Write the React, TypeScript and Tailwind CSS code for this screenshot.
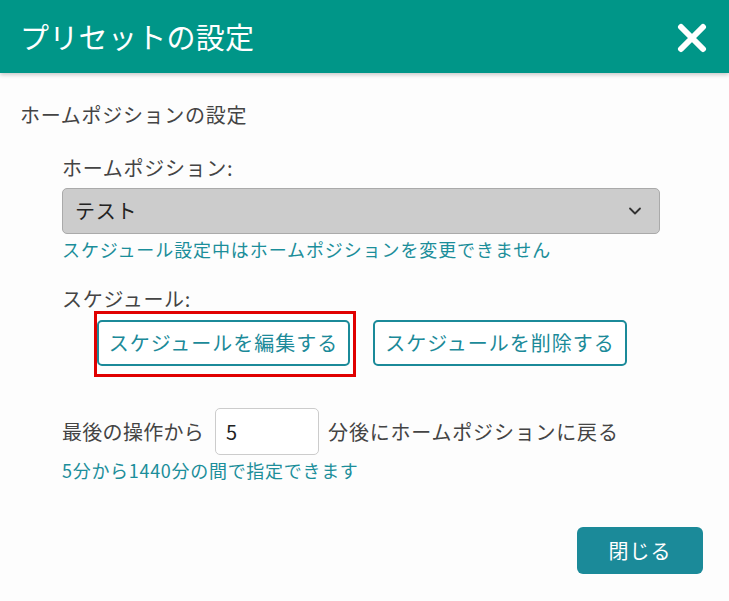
import { ChevronDown } from "lucide-react";

export default function App() {
  return (
    <div
      className="flex h-[601px] w-[729px] flex-col bg-[#fdfdfd] text-[#444]"
      style={{ fontFamily: '"Noto Sans CJK JP", "Noto Sans", sans-serif' }}
    >
      {/* Header */}
      <header className="flex h-[73px] shrink-0 items-center justify-between bg-[#009688] pl-[20px] pr-[22px] shadow-[0_2px_4px_rgba(0,0,0,0.2)]">
        <h1 className="text-[29px] font-normal leading-none tracking-[0.3px] text-white">プリセットの設定</h1>
        <svg width="30" height="30" viewBox="0 0 30 30" className="mt-[2px]">
          <path d="M4 4 L26 26 M26 4 L4 26" stroke="white" strokeWidth="6" strokeLinecap="round" />
        </svg>
      </header>

      {/* Body */}
      <main className="flex flex-1 flex-col px-[20px] pt-[30px]">
        <p className="text-[20px] leading-[24px] tracking-[0.7px]">ホームポジションの設定</p>

        <div className="ml-[42px] mt-[29px] flex flex-col">
          <label className="text-[20px] leading-[24px] tracking-[0.7px]">ホームポジション:</label>
          <div className="mt-[8px] flex h-[46px] w-[598px] items-center justify-between rounded-[5px] border border-[#aaa] bg-[#cccccc] pl-[12px] pr-[14px]">
            <span className="text-[20px] tracking-[0.7px] text-[#222]">テスト</span>
            <ChevronDown className="h-[20px] w-[20px] text-[#333]" strokeWidth={2.2} />
          </div>
          <p className="mt-[3px] text-[18px] leading-[24px] tracking-[0.9px] text-[#1b8e9a]">
            スケジュール設定中はホームポジションを変更できません
          </p>

          <label className="mt-[26px] text-[20px] leading-[24px] tracking-[0.7px]">スケジュール:</label>
          <div className="flex items-start gap-[17px] pl-[32px]">
            <div className="border-[3px] border-[#e00000] pb-[8px] pr-[3px] pt-[6px]">
              <button className="h-[46px] w-[253px] rounded-[5px] border-2 border-[#1b8a99] bg-white text-[20px] tracking-[1px] text-[#1b8a99]">
                スケジュールを編集する
              </button>
            </div>
            <button className="mt-[9px] h-[46px] w-[254px] rounded-[5px] border-2 border-[#1b8a99] bg-white text-[20px] tracking-[1px] text-[#1b8a99]">
              スケジュールを削除する
            </button>
          </div>

          <div className="mt-[31px] flex items-center">
            <span className="text-[20px] tracking-[0.3px]">最後の操作から</span>
            <div className="ml-[11px] flex h-[47px] w-[104px] items-center rounded-[5px] border border-[#ccc] bg-white px-[10px] text-[20px] text-[#222]">
              5
            </div>
            <span className="ml-[9px] text-[20px] tracking-[0.8px]">分後にホームポジションに戻る</span>
          </div>
          <p className="mt-[3px] text-[18px] leading-[24px] tracking-[0.7px] text-[#1b8e9a]">5分から1440分の間で指定できます</p>
        </div>

        <div className="mt-auto flex justify-end pb-[27px] pr-[6px]">
          <button className="h-[47px] w-[126px] rounded-[6px] bg-[#1b8a99] text-[20px] tracking-[1px] text-white">閉じる</button>
        </div>
      </main>
    </div>
  );
}
